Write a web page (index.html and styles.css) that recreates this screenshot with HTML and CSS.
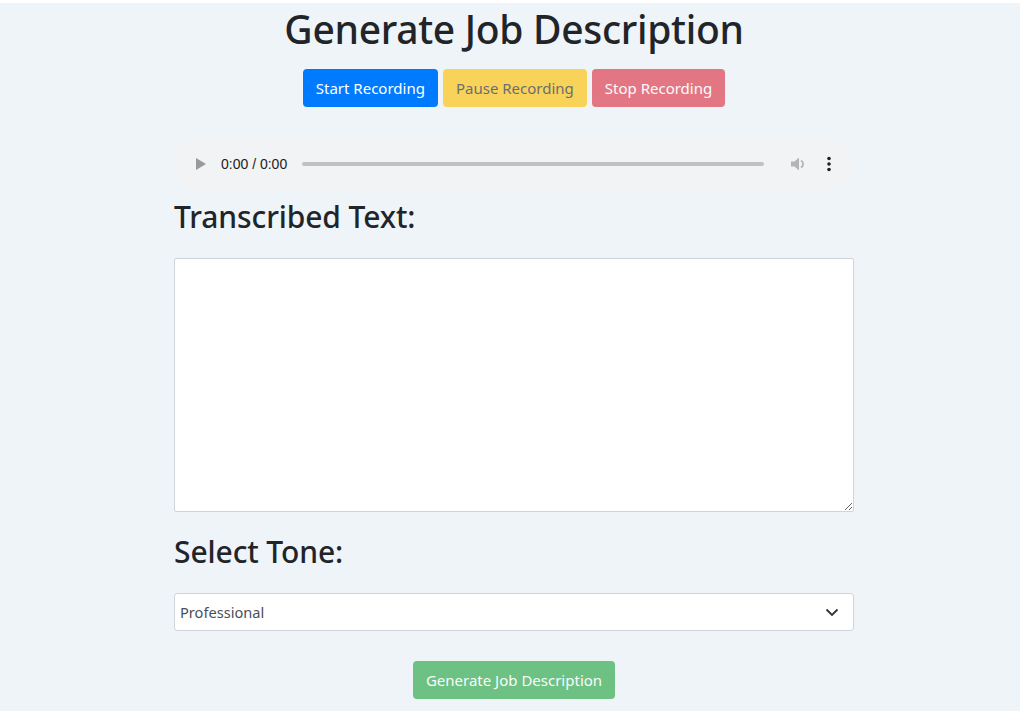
FILE: index.html
```html
<!DOCTYPE html>
<html>
<head>
<meta charset="utf-8">
<link rel="stylesheet" href="styles.css">
</head>
<body>
<div class="page">
  <h1 class="title">Generate Job Description</h1>
  <div class="controls">
    <button class="btn btn-primary">Start Recording</button>
    <button class="btn btn-warning" disabled>Pause Recording</button>
    <button class="btn btn-danger" disabled>Stop Recording</button>
  </div>
  <div class="content">
    <div class="audio">
      <svg class="play" width="12" height="14" viewBox="0 0 12 14"><path d="M1 1 L11 7 L1 13 Z" fill="#9a9a9a"/></svg>
      <span class="time">0:00 / 0:00</span>
      <div class="track"></div>
      <svg class="vol" width="18" height="18" viewBox="0 0 18 18"><path d="M2 6.5 H5.5 L10 2.5 V15.5 L5.5 11.5 H2 Z" fill="#b5b5b5"/><path d="M12 5.5 A4 4 0 0 1 12 12.5" stroke="#b5b5b5" stroke-width="1.8" fill="none"/></svg>
      <svg class="more" width="6" height="18" viewBox="0 0 6 18"><circle cx="3" cy="3.5" r="1.8" fill="#222"/><circle cx="3" cy="9" r="1.8" fill="#222"/><circle cx="3" cy="14.5" r="1.8" fill="#222"/></svg>
    </div>
    <h2 class="heading heading-first">Transcribed Text:</h2>
    <textarea class="field textarea"></textarea>
    <h2 class="heading heading-second">Select Tone:</h2>
    <div class="select">
      <span class="select-value">Professional</span>
      <svg class="chev" width="14" height="9" viewBox="0 0 14 9"><path d="M1.5 1.5 L7 7 L12.5 1.5" stroke="#333" stroke-width="1.8" fill="none"/></svg>
    </div>
    <div class="submit-row">
      <button class="btn btn-success" disabled>Generate Job Description</button>
    </div>
  </div>
</div>
</body>
</html>
```
FILE: styles.css
```css
html, body {
  margin: 0;
  padding: 0;
}
body {
  background: #eff4f8;
  border-top: 3px solid #ffffff;
  font-family: "Noto Sans", "Open Sans", sans-serif;
  color: #212529;
}
.page {
  padding-left: 8px;
  display: flex;
  flex-direction: column;
  align-items: center;
}
.title {
  font-size: 39px;
  line-height: 48px;
  font-weight: 500;
  margin: 2px 0 16px 0;
  letter-spacing: -0.3px;
}
.controls {
  display: flex;
  gap: 5px;
}
.btn {
  font-family: inherit;
  font-size: 15px;
  height: 38px;
  padding: 0 12px;
  border: 1px solid transparent;
  border-radius: 4px;
  line-height: 1.5;
  cursor: pointer;
}
.btn-primary { background: #007bff; color: #fff; }
.btn-warning { background: #ffc107; color: #212529; opacity: .65; }
.btn-danger { background: #dc3545; color: #fff; opacity: .65; }
.btn-success { background: #28a745; color: #fff; opacity: .65; }
.content {
  width: 680px;
  display: flex;
  flex-direction: column;
  margin-top: 30px;
}
.audio {
  height: 54px;
  border-radius: 27px;
  background: #f1f3f4;
  display: flex;
  align-items: center;
  padding: 0 22px 0 21px;
  box-sizing: border-box;
}
.play { margin-right: 14px; }
.time {
  font-family: "Liberation Sans", Arial, sans-serif;
  font-size: 14px;
  color: #222;
  margin-right: 15px;
}
.track {
  flex: 1;
  height: 4px;
  border-radius: 2px;
  background: #c1c1c1;
  margin-right: 25px;
}
.vol { margin-right: 19px; }
.heading {
  font-size: 30px;
  line-height: 38px;
  font-weight: 500;
  margin: 0;
  letter-spacing: -0.1px;
}
.heading-first { margin-top: 7px; margin-bottom: 22px; }
.heading-second { margin-top: 21px; margin-bottom: 22px; }
.field {
  box-sizing: border-box;
  width: 100%;
  background: #fff;
  border: 1px solid #ced4da;
  border-radius: 2px;
}
.textarea {
  height: 254px;
  display: block;
  margin: 0;
  font-family: inherit;
}
.select {
  box-sizing: border-box;
  height: 38px;
  background: #fff;
  border: 1px solid #ced4da;
  border-radius: 3px;
  display: flex;
  align-items: center;
  justify-content: space-between;
  padding: 0 14px 0 5px;
}
.select-value {
  font-size: 14.6px;
  color: #495057;
}
.submit-row {
  display: flex;
  justify-content: center;
  margin-top: 30px;
}
```
